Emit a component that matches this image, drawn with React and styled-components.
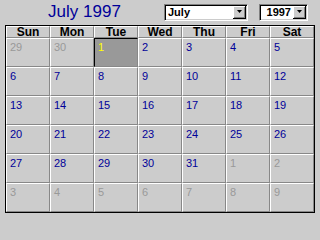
import React from 'react';
import styled, { createGlobalStyle } from 'styled-components';

const GlobalStyle = createGlobalStyle`
  html, body {
    margin: 0;
    padding: 0;
    background: #cccccc;
  }
  body {
    font-family: "Liberation Sans", Arial, sans-serif;
  }
`;

const Page = styled.div`
  width: 319px;
  height: 218px;
  padding: 0 5px;
  box-sizing: border-box;
  background: #cccccc;
`;

const TopBar = styled.div`
  display: flex;
  align-items: flex-start;
  height: 25px;
`;

const Title = styled.div`
  width: 159px;
  text-align: center;
  font-size: 17px;
  line-height: 20px;
  padding-top: 2px;
  color: #000099;
`;

const Select = styled.div`
  display: flex;
  box-sizing: border-box;
  margin-top: 4px;
  margin-left: ${(p) => p.$offset || 0}px;
  width: ${(p) => p.$width}px;
  height: 17px;
  border-style: solid;
  border-width: 1px;
  border-color: #808080 #ffffff #ffffff #808080;
  box-shadow: inset 1px 1px #000000, inset -1px -1px #cccccc;
  background: #ffffff;
  padding: 1px;
`;

const SelectText = styled.div`
  flex: 1;
  font-size: 11px;
  font-weight: bold;
  line-height: 13px;
  color: #000000;
  text-align: ${(p) => (p.$right ? 'right' : 'left')};
  padding: 0 ${(p) => (p.$right ? 2 : 0)}px 0 ${(p) => (p.$right ? 0 : 2)}px;
`;

const DropButton = styled.div`
  width: 13px;
  height: 13px;
  box-sizing: border-box;
  background: #cccccc;
  box-shadow: inset -1px -1px #000000, inset 1px 1px #ffffff, inset -2px -2px #808080;
  display: flex;
  align-items: center;
  justify-content: center;
  padding: 0 1px 1px 0;
`;

const Grid = styled.div`
  display: grid;
  grid-template-columns: repeat(7, 44px);
  grid-template-rows: 12px repeat(6, 29px);
  border: 1px solid #000000;
  width: 308px;
`;

const HeadCell = styled.div`
  box-sizing: border-box;
  border-style: solid;
  border-width: 1px;
  border-color: #ffffff #888888 #888888 #ffffff;
  font-size: 12px;
  font-weight: bold;
  line-height: 10px;
  text-align: center;
  color: #000000;
`;

const DayCell = styled.div`
  box-sizing: border-box;
  border-style: solid;
  border-width: 1px;
  border-color: ${(p) =>
    p.$selected ? '#000000 #888888 #888888 #000000' : '#ffffff #888888 #888888 #ffffff'};
  background: ${(p) => (p.$selected ? '#999999' : '#cccccc')};
  color: ${(p) => (p.$selected ? '#ffff00' : p.$other ? '#999999' : '#000099')};
  font-size: 11px;
  line-height: 12px;
  padding: 2px 0 0 3px;
`;

const Arrow = () => (
  <svg width="7" height="5" viewBox="0 0 7 5">
    <path d="M1 0h5L3.5 3z" fill="#000" />
  </svg>
);

const weekDays = ['Sun', 'Mon', 'Tue', 'Wed', 'Thu', 'Fri', 'Sat'];

function buildDays() {
  const days = [
    { n: 29, other: true },
    { n: 30, other: true },
  ];
  for (let i = 1; i <= 31; i++) days.push({ n: i, selected: i === 1 });
  for (let i = 1; i <= 9; i++) days.push({ n: i, other: true });
  return days;
}

export default function App() {
  const days = buildDays();
  return (
    <>
      <GlobalStyle />
      <Page>
        <TopBar>
          <Title>July 1997</Title>
          <Select $width={84}>
            <SelectText>July</SelectText>
            <DropButton>
              <Arrow />
            </DropButton>
          </Select>
          <Select $width={49} $offset={11}>
            <SelectText $right>1997</SelectText>
            <DropButton>
              <Arrow />
            </DropButton>
          </Select>
        </TopBar>
        <Grid>
          {weekDays.map((d) => (
            <HeadCell key={d}>{d}</HeadCell>
          ))}
          {days.map((d, i) => (
            <DayCell key={i} $other={d.other} $selected={d.selected}>
              {d.n}
            </DayCell>
          ))}
        </Grid>
      </Page>
    </>
  );
}
